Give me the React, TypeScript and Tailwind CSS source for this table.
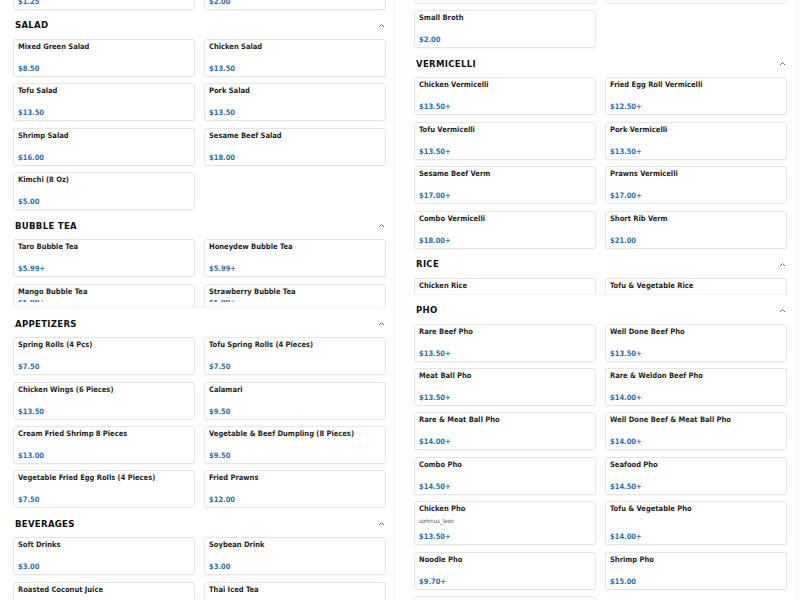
import React from "react";

type Item = { name: string; price: string; sub?: string };

const Chevron = () => (
  <svg width="7" height="5" viewBox="0 0 7 5" className="block">
    <polyline points="1,4 3.5,1.5 6,4" fill="none" stroke="#6b7280" strokeWidth="1" />
  </svg>
);

function Card({ item, peek, open }: { item: Item; peek?: boolean; open?: boolean }) {
  if (peek) {
    return (
      <div className={`bg-white border border-[#e6e6e6] rounded-[3px] shadow-[0_1px_2px_rgba(0,0,0,0.04)] px-[4px] pt-[1px] overflow-hidden ${open ? "h-[30px] border-b-0 rounded-b-none" : "h-[24px]"}`}>
        <div className="text-[7.5px] leading-[12px] font-bold text-[#1f1f1f] whitespace-nowrap">{item.name}</div>
        {!open && (
          <div className="mt-[2px] h-[2px] overflow-hidden">
            <div className="-mt-[3px] text-[7.5px] leading-[12px] font-bold text-[#2c6fad]">{item.price}</div>
          </div>
        )}
      </div>
    );
  }
  return (
    <div className="bg-white border border-[#e6e6e6] rounded-[3px] shadow-[0_1px_2px_rgba(0,0,0,0.04)] px-[4px] pt-[1px] pb-[1px] min-h-[38px] flex flex-col justify-between">
      <div>
        <div className="text-[7.5px] leading-[12px] font-bold text-[#1f1f1f] whitespace-nowrap">{item.name}</div>
        {item.sub && <div className="text-[6px] leading-[12px] mb-[4px] text-[#555]">{item.sub}</div>}
      </div>
      <div className="text-[7.5px] leading-[12px] font-bold text-[#2c6fad]">{item.price}</div>
    </div>
  );
}

function Grid({ items }: { items: Item[] }) {
  return (
    <div className="grid grid-cols-[182px_182px] gap-x-[9px] gap-y-[6.4px]">
      {items.map((it, i) => (
        <Card key={i} item={it} />
      ))}
    </div>
  );
}

function Section({
  title,
  items,
  clip,
  clipH,
  peekItems,
  open,
}: {
  title: string;
  items: Item[];
  clip?: boolean;
  clipH?: string;
  peekItems?: Item[];
  open?: boolean;
}) {
  return (
    <div className={clip ? `${clipH} overflow-hidden border-b border-[#f3f3f3]` : ""}>
      <div className="h-[29px] pt-[2px] flex items-center justify-between pl-[2px] pr-[1px]">
        <span className="text-[9.5px] font-bold tracking-[0.3px] text-[#111]">{title}</span>
        <Chevron />
      </div>
      <div className="flex flex-col gap-y-[6.4px]">
        {items.length > 0 && <Grid items={items} />}
        {peekItems && (
          <div className="grid grid-cols-[182px_182px] gap-x-[9px]">
            {peekItems.map((it, i) => (
              <Card key={i} item={it} peek open={open} />
            ))}
          </div>
        )}
      </div>
    </div>
  );
}

export default function App() {
  const font = "[font-family:'DejaVu_Sans',sans-serif] [font-stretch:condensed]";
  return (
    <div className={`w-[800px] h-[600px] overflow-hidden bg-[#fbfbfb] flex gap-[8px] ${font}`}>
      {/* Left column */}
      <div className="w-[393px] h-[600px] bg-white pl-[13px] pr-[7px] overflow-hidden">
        <div className="-mt-[28px]">
          <Grid
            items={[
              { name: "Extra Sauce", price: "$1.25" },
              { name: "Extra Noodles", price: "$2.00" },
            ]}
          />
        </div>
        <Section
          title="SALAD"
          items={[
            { name: "Mixed Green Salad", price: "$8.50" },
            { name: "Chicken Salad", price: "$13.50" },
            { name: "Tofu Salad", price: "$13.50" },
            { name: "Pork Salad", price: "$13.50" },
            { name: "Shrimp Salad", price: "$16.00" },
            { name: "Sesame Beef Salad", price: "$18.00" },
            { name: "Kimchi (8 Oz)", price: "$5.00" },
          ]}
        />
        <Section
          title="BUBBLE TEA"
          clip
          clipH="h-[98px]"
          items={[
            { name: "Taro Bubble Tea", price: "$5.99+" },
            { name: "Honeydew Bubble Tea", price: "$5.99+" },
          ]}
          peekItems={[
            { name: "Mango Bubble Tea", price: "$5.99+" },
            { name: "Strawberry Bubble Tea", price: "$5.99+" },
          ]}
        />
        <Section
          title="APPETIZERS"
          items={[
            { name: "Spring Rolls (4 Pcs)", price: "$7.50" },
            { name: "Tofu Spring Rolls (4 Pieces)", price: "$7.50" },
            { name: "Chicken Wings (6 Pieces)", price: "$13.50" },
            { name: "Calamari", price: "$9.50" },
            { name: "Cream Fried Shrimp 8 Pieces", price: "$13.00" },
            { name: "Vegetable & Beef Dumpling (8 Pieces)", price: "$9.50" },
            { name: "Vegetable Fried Egg Rolls (4 Pieces)", price: "$7.50" },
            { name: "Fried Prawns", price: "$12.00" },
          ]}
        />
        <Section
          title="BEVERAGES"
          items={[
            { name: "Soft Drinks", price: "$3.00" },
            { name: "Soybean Drink", price: "$3.00" },
            { name: "Roasted Coconut Juice", price: "$5.50" },
            { name: "Thai Iced Tea", price: "$5.50" },
          ]}
        />
      </div>

      {/* Right column */}
      <div className="w-[393px] h-[600px] bg-white pl-[13px] pr-[7px] overflow-hidden">
        <div className="-mt-[34px]">
          <Grid
            items={[
              { name: "Large Broth", price: "$4.00" },
              { name: "Extra Meat", price: "$4.00" },
              { name: "Small Broth", price: "$2.00" },
            ]}
          />
        </div>
        <Section
          title="VERMICELLI"
          items={[
            { name: "Chicken Vermicelli", price: "$13.50+" },
            { name: "Fried Egg Roll Vermicelli", price: "$12.50+" },
            { name: "Tofu Vermicelli", price: "$13.50+" },
            { name: "Pork Vermicelli", price: "$13.50+" },
            { name: "Sesame Beef Verm", price: "$17.00+" },
            { name: "Prawns Vermicelli", price: "$17.00+" },
            { name: "Combo Vermicelli", price: "$18.00+" },
            { name: "Short Rib Verm", price: "$21.00" },
          ]}
        />
        <Section
          title="RICE"
          clip
          clipH="h-[46px]"
          items={[]}
          open
          peekItems={[
            { name: "Chicken Rice", price: "$13.50+" },
            { name: "Tofu & Vegetable Rice", price: "$14.00+" },
          ]}
        />
        <Section
          title="PHO"
          items={[
            { name: "Rare Beef Pho", price: "$13.50+" },
            { name: "Well Done Beef Pho", price: "$13.50+" },
            { name: "Meat Ball Pho", price: "$13.50+" },
            { name: "Rare & Weldon Beef Pho", price: "$14.00+" },
            { name: "Rare & Meat Ball Pho", price: "$14.00+" },
            { name: "Well Done Beef & Meat Ball Pho", price: "$14.00+" },
            { name: "Combo Pho", price: "$14.50+" },
            { name: "Seafood Pho", price: "$14.50+" },
            { name: "Chicken Pho", price: "$13.50+", sub: "somnus_leon" },
            { name: "Tofu & Vegetable Pho", price: "$14.00+" },
            { name: "Noodle Pho", price: "$9.70+" },
            { name: "Shrimp Pho", price: "$15.00" },
            { name: "Beef Stew Pho", price: "$16.00" },
          ]}
        />
      </div>
    </div>
  );
}
